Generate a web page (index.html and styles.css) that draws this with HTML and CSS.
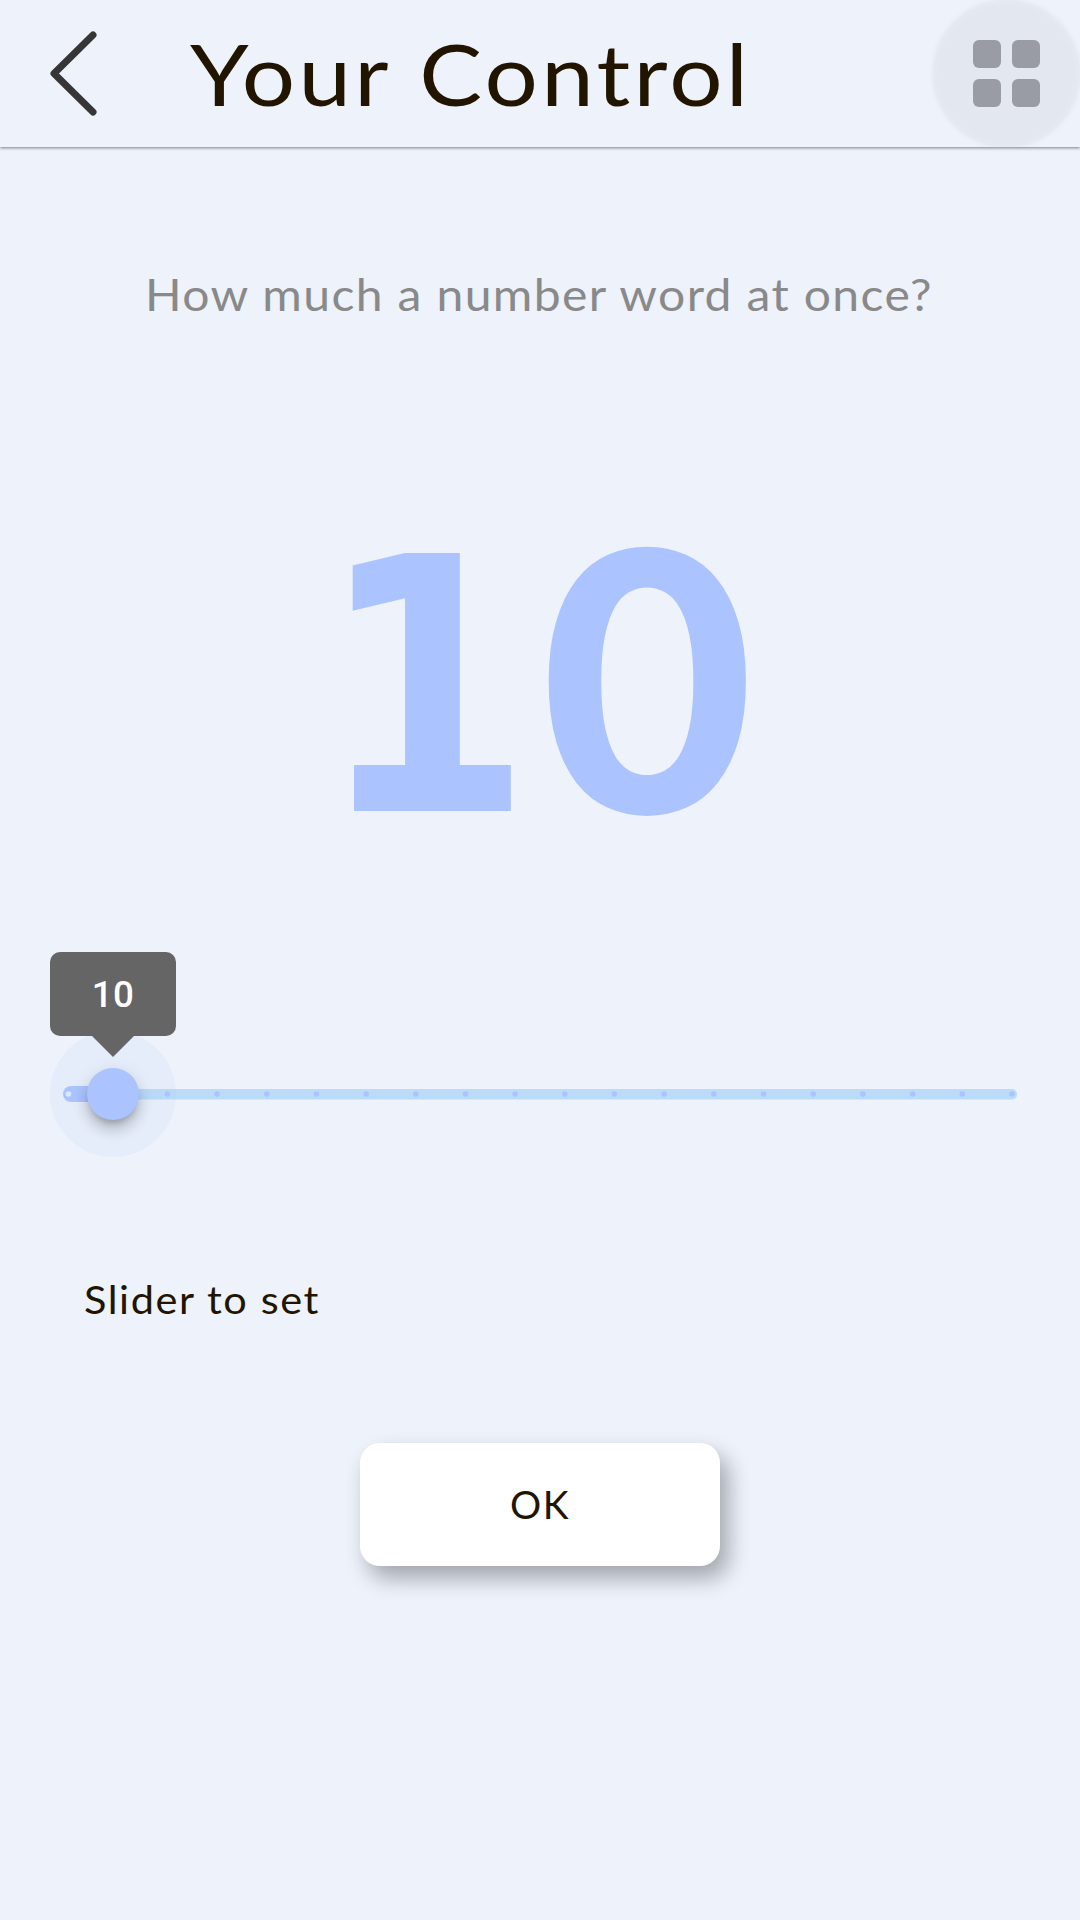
FILE: index.html
```html
<!DOCTYPE html>
<html lang="en">
<head>
<meta charset="utf-8">
<title>Your Control</title>
<link rel="stylesheet" href="styles.css">
</head>
<body>
<header class="bar">
  <svg class="back" width="48" height="86" viewBox="0 0 48 86" aria-label="Back"><path d="M43 5 4 43.500 43 82"/></svg>
  <h1 class="title">Your Control</h1>
  <button class="menu" aria-label="Menu">
    <span class="cell"></span><span class="cell"></span><span class="cell"></span><span class="cell"></span>
  </button>
</header>
<main class="content">
  <p class="question">How much a number word at once?</p>
  <div class="amount"><span class="one">1</span><span class="zero">0</span></div>
  <div class="slider">
    <svg class="track" width="1080" height="130" viewBox="0 0 1080 130">
      <rect class="rest" x="113" y="60" width="904" height="10.500" rx="5"/>
      <path class="dots" d="M167.400 65H1015"/>
      <circle class="halo" cx="113" cy="65" r="63"/>
      <rect class="active" x="63" y="57" width="60" height="16" rx="8"/>
      <circle class="first" cx="68.400" cy="65" r="2.800"/>
    </svg>
    <span class="thumb"></span>
    <div class="tip">10</div>
  </div>
  <p class="hint">Slider to set</p>
  <button class="ok">OK</button>
</main>
</body>
</html>
```
FILE: styles.css
```css
* { box-sizing: border-box; }
body {
  margin: 0;
  height: 1920px;
  overflow: hidden;
  background: #edf2fb;
  color: #221500;
  font-family: Lato, sans-serif;
}
h1, p { margin: 0; font-weight: 400; white-space: nowrap; }
button { border: 0; padding: 0; font: inherit; color: inherit; }
.bar {
  height: 147px;
  display: flex;
  align-items: center;
  padding-left: 50px;
  box-shadow: 0 1px 3px rgba(0, 0, 0, .48);
}
.back { margin-bottom: 2px; fill: none; stroke: #363636; stroke-width: 7; stroke-linecap: round; stroke-linejoin: round; }
.title {
  margin-left: 92px;
  font-size: 86px;
  line-height: 146px;
  padding-bottom: 1px;
  letter-spacing: 3px;
  word-spacing: 2px;
  transform: scaleX(1.095);
  transform-origin: left;
}
.menu {
  margin: 0 0 0 auto;
  width: 147px;
  height: 147px;
  border-radius: 50%;
  background: #e3e7ef;
  box-shadow: inset 0 0 9px #e9edf5, 0 0 5px rgba(180, 185, 195, .18);
  display: grid;
  grid-template-columns: 28px 28px;
  grid-auto-rows: 28px;
  gap: 11px;
  place-content: center;
}
.cell { background: #999ca5; border-radius: 6px; }
.content { display: flex; flex-direction: column; }
.question {
  margin: 117px 0 0 145px;
  font-size: 45px;
  line-height: 60px;
  letter-spacing: 1.300px;
  color: #898989;
  transform: scaleX(1.067);
  transform-origin: left;
  align-self: flex-start;
}
.amount {
  height: 400px;
  margin-top: 164px;
  padding-left: 318px;
  display: flex;
  align-items: flex-start;
  line-height: 400px;
  font-weight: 700;
  color: #abc3ff;
}
.one {
  width: 224px;
  font-family: "DejaVu Sans Condensed", "DejaVu Sans", sans-serif;
  font-size: 354px;
  font-stretch: condensed;
  transform: scaleX(.965);
  transform-origin: left;
}
.zero { font-size: 363px; line-height: 370px; font-weight: 900; transform: scaleX(1.015); }
.slider { position: relative; height: 130px; margin-top: 141px; }
.track { display: block; }
.rest { fill: #bbdcf9; }
.dots { fill: none; stroke: #abc3ff; stroke-width: 5.600; stroke-linecap: round; stroke-dasharray: 0 49.680; }
.halo { fill: #abc3f6; opacity: .12; }
.active { fill: #abc3ff; }
.first { fill: #dde7ff; }
.thumb {
  position: absolute;
  left: 87px;
  top: 39px;
  width: 52px;
  height: 52px;
  border-radius: 50%;
  background: #abc3ff;
  box-shadow: 0 6px 6px -3px rgba(0, 0, 0, .2), 0 10px 14px 1px rgba(0, 0, 0, .14), 0 4px 18px 3px rgba(0, 0, 0, .06);
}
.tip {
  position: absolute;
  left: 50px;
  top: -77px;
  width: 126px;
  height: 84px;
  border-radius: 10px;
  background: #656565;
  color: #fff;
  font: 500 36.750px/86px Roboto, sans-serif;
  letter-spacing: .3px;
  text-align: center;
}
.tip::after {
  content: "";
  position: absolute;
  left: 42px;
  top: 84px;
  border: 21px solid transparent;
  border-top-color: #656565;
  border-bottom: 0;
}
.hint {
  margin: 110px 0 1px 84px;
  font-size: 39px;
  line-height: 60px;
  letter-spacing: 1.500px;
  transform: scaleX(1.063);
  transform-origin: left;
  align-self: flex-start;
}
.ok {
  width: 360px;
  height: 123px;
  margin: 113px auto 0;
  padding-bottom: 2px;
  border-radius: 20px;
  background: #fff;
  font-size: 39px;
  letter-spacing: 1.500px;
  box-shadow: 8px 12px 22px rgba(0, 0, 0, .32);
}
```
